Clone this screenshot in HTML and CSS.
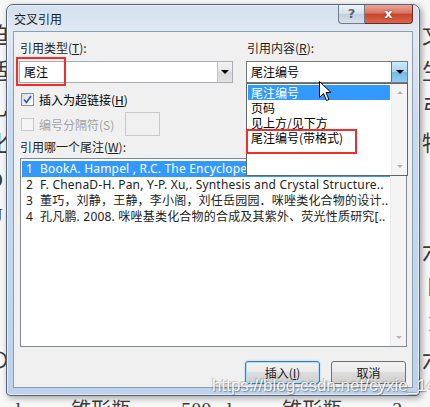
FILE: index.html
```html
<!DOCTYPE html>
<html lang="zh-CN">
<head>
  <meta charset="UTF-8">
  <title>交叉引用</title>
  <link rel="stylesheet" href="styles.css">
</head>
<body>

  <!-- document behind the dialog -->
  <div class="doc">
    <div class="doc-line"><span>迫</span><span>文</span></div>
    <div class="doc-line"><span>适</span><span>生</span></div>
    <div class="doc-line"><span>乚</span><span>弓</span></div>
    <div class="doc-line"><span>化</span><span>物</span></div>
    <div class="doc-line"><span>O</span><span>/</span></div>
    <div class="doc-line"><span>U</span><span>E</span></div>
    <div class="doc-line"><span>1</span><span>六</span></div>
    <div class="doc-line"><span>Z</span><span>ト</span></div>
    <div class="doc-line"><span>9</span><span>H</span></div>
    <div class="doc-line"><span>の</span><span>六</span></div>
    <div class="doc-line doc-bottom"><span>0ml</span><span>锥形瓶</span><span>500ml</span><span>锥形瓶</span><span>2</span></div>
  </div>

  <div class="dialog">
    <div class="titlebar">
      <span class="title">交叉引用</span>
      <div class="caption-btns">
        <span class="cap-help">?</span>
        <span class="cap-close">x</span>
      </div>
    </div>

    <div class="client">
      <div class="top-grid">
        <div class="col">
          <div class="label">引用类型(<u>T</u>):</div>
          <div class="combo">
            <span class="combo-text">尾注</span>
            <span class="combo-btn"><i class="tri"></i></span>
            <div class="mark mark-type"></div>
          </div>
          <div class="check-row">
            <span class="check">
              <svg width="9" height="9" viewBox="0 0 9 9"><path d="M1 4.5 L3.5 7.5 L8 1" fill="none" stroke="#2b55a8" stroke-width="1.6"/></svg>
            </span>
            <span>插入为超链接(<u>H</u>)</span>
          </div>
          <div class="check-row disabled">
            <span class="check"></span>
            <span>编号分隔符(S)</span>
            <span class="sep-box"></span>
          </div>
        </div>

        <div class="col">
          <div class="label">引用内容(<u>R</u>):</div>
          <div class="combo open">
            <span class="combo-text">尾注编号</span>
            <span class="combo-btn"><i class="tri"></i></span>
            <div class="droplist">
              <div class="drop-items">
                <div class="drop-item selected">尾注编号</div>
                <div class="drop-item">页码</div>
                <div class="drop-item">见上方/见下方</div>
                <div class="drop-item">尾注编号(带格式)</div>
              </div>
              <div class="vscroll"><i class="arr up"></i><i class="arr down"></i></div>
              <div class="mark mark-format"></div>
            </div>
            <svg class="cursor" width="13" height="21" viewBox="0 0 13 21">
              <path d="M0.5 0.5 L0.5 16.5 L4.5 12.5 L7.5 19.5 L10 18.5 L7 11.5 L12 11.5 Z" fill="#fff" stroke="#000" stroke-width="1"/>
            </svg>
          </div>
        </div>
      </div>

      <div class="label label-list">引用哪一个尾注(<u>W</u>):</div>
      <div class="listbox">
        <div class="list-items">
          <div class="list-item selected"><span class="num">1</span>BookA. Hampel , R.C. The Encyclopedia of Chemistry..</div>
          <div class="list-item"><span class="num">2</span>F. ChenaD-H. Pan, Y-P. Xu,. Synthesis and Crystal Structure..</div>
          <div class="list-item"><span class="num">3</span>董巧，刘静，王静，李小阁，刘任岳园园．咪唑类化合物的设计..</div>
          <div class="list-item"><span class="num">4</span>孔凡鹏. 2008. 咪唑基类化合物的合成及其紫外、荧光性质研究[..</div>
        </div>
        <div class="vscroll"><i class="arr up"></i><i class="arr down"></i></div>
      </div>

      <div class="buttons">
        <button class="btn default">插入(<u>I</u>)</button>
        <button class="btn">取消</button>
      </div>
    </div>
  </div>

  <div class="watermark">https://blog.csdn.net/cyxie_14</div>
</body>
</html>
```

FILE: styles.css
```css
* { box-sizing: border-box; }

body {
  margin: 0;
  width: 430px;
  height: 407px;
  overflow: hidden;
  position: relative;
  background: #f7f7f7;
  font-family: "Noto Sans CJK SC", sans-serif;
}

/* Document behind */
.doc {
  font-family: "Liberation Serif", "Noto Sans CJK SC", serif;
  font-size: 22px;
  color: #3a3a3a;
  padding-top: 18px;
}
.doc-line {
  display: flex;
  justify-content: space-between;
  height: 36px;
  line-height: 36px;
  margin: 0 -14px 0 -13px;
}
.doc-bottom {
  justify-content: flex-start;
  gap: 50px;
  margin-left: -10px;
  margin-top: 14px;
  font-size: 20px;
}

/* Dialog window */
.dialog {
  position: absolute;
  left: 6px;
  top: 4px;
  width: 414px;
  height: 392px;
  border: 1px solid #55667a;
  border-radius: 7px 7px 4px 4px;
  background: linear-gradient(180deg, #d3e0ee 0%, #e1e9f3 7%, #c9daed 30%, #bdd3eb 100%);
  box-shadow: inset 0 0 0 1px rgba(255,255,255,0.55), 2px 2px 6px rgba(0,0,0,0.35);
  display: flex;
  flex-direction: column;
}

.titlebar {
  height: 27px;
  display: flex;
  justify-content: space-between;
  padding-right: 6px;
}
.title {
  font-size: 12px;
  line-height: 16px;
  margin: 6px 0 0 7px;
  color: #1a1a1a;
}
.caption-btns {
  display: flex;
  height: 19px;
}
.cap-help {
  width: 27px;
  border: 1px solid #6e7b8b;
  border-top: none;
  border-radius: 0 0 0 4px;
  background: linear-gradient(#eef3f8, #d6dfe9 50%, #c3cfdc 51%, #d7e1eb);
  color: #5a6472;
  font: bold 13px/18px "DejaVu Sans", sans-serif;
  text-align: center;
}
.cap-close {
  width: 48px;
  border: 1px solid #6b2c24;
  border-left: none;
  border-top: none;
  border-radius: 0 0 4px 0;
  background: linear-gradient(#eaa496, #db7662 45%, #c7442c 50%, #d9674f);
  color: #fff;
  font: bold 13px/17px "DejaVu Sans", sans-serif;
  text-align: center;
  text-shadow: 0 0 2px #6e1a0e;
}

/* Client area */
.client {
  flex: 1;
  margin: 0 6px 7px 6px;
  border: 1px solid #8c9eb4;
  background: #f0f0f0;
  padding: 8px 4px 3px 5px;
  font-size: 12px;
  color: #000;
}

.top-grid {
  display: grid;
  grid-template-columns: 214px 162px;
  column-gap: 13px;
}

.label {
  height: 16px;
  line-height: 16px;
  padding-left: 1px;
  margin-bottom: 5px;
  white-space: nowrap;
  color: #1e1e1e;
}
.label-list {
  margin-top: 3px;
  margin-bottom: 3px;
}

/* Combo boxes */
.combo {
  position: relative;
  height: 22px;
  border: 1px solid #abadb3;
  background: #fff;
  display: flex;
  align-items: center;
}
.combo-text {
  flex: 1;
  padding-left: 4px;
  line-height: 20px;
}
.combo-btn {
  width: 15px;
  height: 20px;
  border-left: 1px solid #c2c2c2;
  background: linear-gradient(#f3f3f3, #e6e6e6 50%, #dadada 51%, #e2e2e2);
  display: flex;
  align-items: center;
  justify-content: center;
}
.combo.open { border-color: #7a7a7a; }
.combo.open .combo-btn {
  width: 16px;
  border-left: 1px solid #3c7fb1;
  background: linear-gradient(#cdeafb, #a5d6f4 50%, #6fbbe8 51%, #92cdf0);
}
.tri {
  width: 0;
  height: 0;
  border-left: 4px solid transparent;
  border-right: 4px solid transparent;
  border-top: 4px solid #000;
}

/* Red highlight marks */
.mark {
  position: absolute;
  border: 2px solid #f32c2c;
  z-index: 3;
}
.mark-type { left: -4px; top: -5px; width: 50px; height: 29px; }
.mark-format { left: -1px; top: 45px; width: 111px; height: 25px; }

/* Drop-down list */
.droplist {
  position: absolute;
  left: -1px;
  top: 21px;
  width: 162px;
  height: 93px;
  border: 1px solid #646464;
  background: #fff;
  display: flex;
  z-index: 2;
}
.drop-items {
  flex: 1;
  padding: 1px;
}
.drop-item {
  height: 15px;
  line-height: 15px;
  padding-left: 3px;
  white-space: nowrap;
}
.drop-item.selected {
  background: #3399ff;
  color: #fff;
}

.cursor {
  position: absolute;
  left: 72px;
  top: 19px;
  z-index: 4;
}

/* Check boxes */
.check-row {
  display: flex;
  align-items: center;
  height: 16px;
  margin-top: 8px;
  padding-left: 2px;
  gap: 5px;
  white-space: nowrap;
}
.check {
  width: 13px;
  height: 13px;
  border: 1px solid #8e8f8f;
  background: linear-gradient(135deg, #d8dde3, #ffffff);
  display: flex;
  align-items: center;
  justify-content: center;
}
.check-row.disabled {
  color: #a3a3a3;
  height: 24px;
  margin-top: 5px;
}
.check-row.disabled .check {
  border-color: #c9c9c9;
  background: #f5f5f5;
}
.sep-box {
  width: 35px;
  height: 24px;
  border: 1px solid #c9c9c9;
  background: #f0f0f0;
  margin-left: 6px;
}

/* List box */
.listbox {
  margin-left: 1px;
  width: 387px;
  height: 189px;
  border: 1px solid #828790;
  background: #fff;
  display: flex;
}
.list-items {
  flex: 1;
  min-width: 0;
  padding: 2px 0 0 1px;
  overflow: hidden;
}
.list-item {
  height: 16px;
  line-height: 16px;
  white-space: nowrap;
  overflow: hidden;
  padding-left: 4px;
  font-family: "Noto Sans", "Noto Sans CJK SC", sans-serif;
  letter-spacing: 0.2px;
  color: #222;
}
.list-item .num {
  display: inline-block;
  width: 14px;
}
.list-item.selected {
  background: #3399ff;
  color: #fff;
}

/* Scrollbar */
.vscroll {
  width: 16px;
  background: #f4f4f4;
  border-left: 1px solid #ececec;
  display: flex;
  flex-direction: column;
  justify-content: space-between;
  align-items: center;
  padding: 7px 0;
}
.arr {
  width: 0;
  height: 0;
  border-left: 3px solid transparent;
  border-right: 3px solid transparent;
}
.arr.up { border-bottom: 3px solid #b5b5b5; }
.arr.down { border-top: 3px solid #b5b5b5; }

/* Buttons */
.buttons {
  display: flex;
  justify-content: flex-end;
  gap: 11px;
  margin-top: 14px;
  padding-right: 2px;
}
.btn {
  width: 75px;
  height: 23px;
  padding: 0;
  border: 1px solid #707070;
  border-radius: 3px;
  background: linear-gradient(#f2f2f2, #ebebeb 45%, #dddddd 50%, #cfcfcf);
  font: 12px "Noto Sans CJK SC", sans-serif;
  color: #1a1a1a;
}
.btn.default {
  border-color: #3c7fb1;
  box-shadow: inset 0 0 0 1px #a9dcf6, 0 0 2px #8fc4e6;
}

.watermark {
  position: absolute;
  left: 212px;
  top: 376px;
  font: 17px "Liberation Sans", sans-serif;
  color: rgba(255,255,255,0.9);
  text-shadow: 1px 1px 1px rgba(0,0,0,0.35), -1px -1px 1px rgba(0,0,0,0.2);
  white-space: nowrap;
}
```
